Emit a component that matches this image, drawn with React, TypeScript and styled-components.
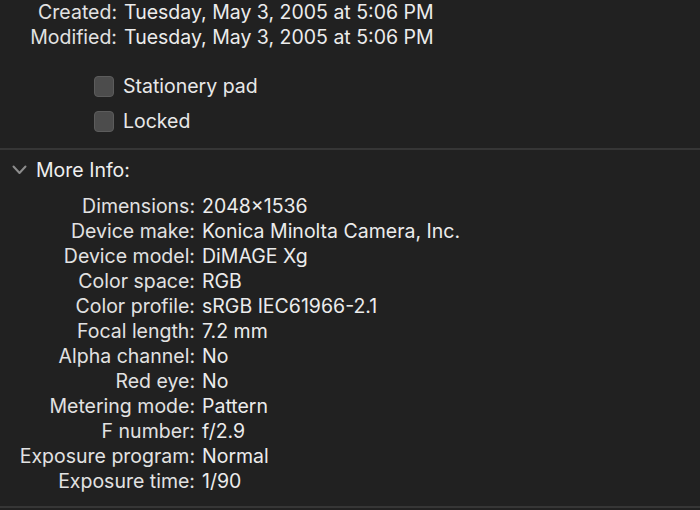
import React from "react";
import styled, { createGlobalStyle } from "styled-components";

const GlobalStyle = createGlobalStyle`
  html, body {
    margin: 0;
    padding: 0;
    background: #212121;
  }
  body {
    font-family: Inter, "Noto Sans", "Liberation Sans", sans-serif;
    color: #e6e6e6;
    -webkit-font-smoothing: antialiased;
  }
`;

const Panel = styled.div`
  width: 700px;
  height: 510px;
  overflow: hidden;
  display: flex;
  flex-direction: column;
`;

const Section = styled.div`
  display: flex;
  flex-direction: column;
`;

const InfoGrid = styled.div<{ labelWidth: number }>`
  display: grid;
  grid-template-columns: ${({ labelWidth }) => labelWidth}px auto;
  column-gap: 7px;
  justify-content: start;
  font-size: 19.5px;
  line-height: 25px;
`;

const Label = styled.div`
  text-align: right;
  white-space: nowrap;
  color: #e2e2e2;
`;

const Value = styled.div`
  white-space: nowrap;
  color: #ececec;
`;

const Checks = styled.div`
  display: flex;
  flex-direction: column;
  gap: 14px;
  padding: 26px 0 0 94px;
`;

const CheckRow = styled.label`
  display: flex;
  align-items: center;
  gap: 9px;
  font-size: 19.5px;
  line-height: 21px;
  color: #e8e8e8;
`;

const Box = styled.span`
  width: 20px;
  height: 21px;
  box-sizing: border-box;
  border-radius: 4px;
  background: #4c4c4c;
  border: 1px solid #5c5c5c;
`;

const Divider = styled.div<{ gapAbove?: number }>`
  height: 2px;
  margin-top: ${({ gapAbove = 0 }) => gapAbove}px;
  background: #363636;
`;

const Disclosure = styled.div`
  display: flex;
  align-items: center;
  gap: 9px;
  padding: 9px 0 0 12px;
  font-size: 19.5px;
  line-height: 22px;
  color: #efefef;
`;

const MoreGrid = styled(InfoGrid)`
  padding-top: 13px;
`;

const Filler = styled.div`
  flex: 1;
`;

const BottomEdge = styled.div`
  height: 2px;
`;

const Chevron = () => (
  <svg width="15" height="10" viewBox="0 0 15 10" fill="none">
    <path d="M1.5 1.5 L7.5 8 L13.5 1.5" stroke="#8c8c8c" strokeWidth="2" strokeLinecap="round" strokeLinejoin="round" />
  </svg>
);

const dates = [
  ["Created:", "Tuesday, May 3, 2005 at 5:06 PM"],
  ["Modified:", "Tuesday, May 3, 2005 at 5:06 PM"],
];

const moreInfo = [
  ["Dimensions:", "2048×1536"],
  ["Device make:", "Konica Minolta Camera, Inc."],
  ["Device model:", "DiMAGE Xg"],
  ["Color space:", "RGB"],
  ["Color profile:", "sRGB IEC61966-2.1"],
  ["Focal length:", "7.2 mm"],
  ["Alpha channel:", "No"],
  ["Red eye:", "No"],
  ["Metering mode:", "Pattern"],
  ["F number:", "f/2.9"],
  ["Exposure program:", "Normal"],
  ["Exposure time:", "1/90"],
];

export default function App() {
  return (
    <Panel>
      <GlobalStyle />
      <Section>
        <InfoGrid labelWidth={117}>
          {dates.map(([k, v]) => (
            <React.Fragment key={k}>
              <Label>{k}</Label>
              <Value>{v}</Value>
            </React.Fragment>
          ))}
        </InfoGrid>
        <Checks>
          <CheckRow>
            <Box />
            Stationery pad
          </CheckRow>
          <CheckRow>
            <Box />
            Locked
          </CheckRow>
        </Checks>
      </Section>
      <Divider gapAbove={16} />
      <Disclosure>
        <Chevron />
        More Info:
      </Disclosure>
      <MoreGrid labelWidth={195}>
        {moreInfo.map(([k, v]) => (
          <React.Fragment key={k}>
            <Label>{k}</Label>
            <Value>{v}</Value>
          </React.Fragment>
        ))}
      </MoreGrid>
      <Filler />
      <Divider />
      <BottomEdge />
    </Panel>
  );
}
